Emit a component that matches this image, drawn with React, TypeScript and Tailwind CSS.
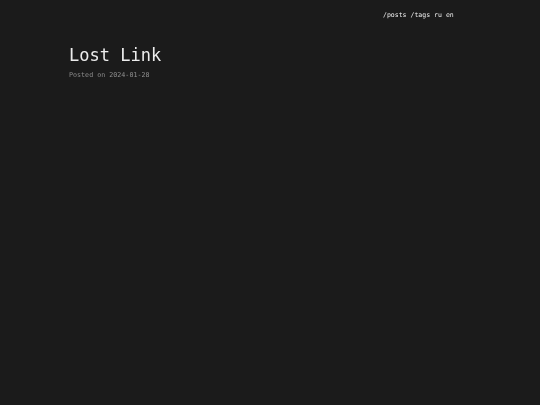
export default function App() {
  return (
    <div
      className="min-h-screen w-full bg-[#1b1b1b] text-[#e4e4e4]"
      style={{ fontFamily: '"DejaVu Sans Mono", "Liberation Mono", monospace' }}
    >
      <div className="mx-auto w-[402px]">
        <header className="flex justify-end pr-[17px] pt-[10px]">
          <nav className="flex gap-[4px] text-[6.5px] leading-[10px] text-[#f0f0f0] will-change-transform">
            <a>/posts</a>
            <a>/tags</a>
            <a>ru</a>
            <a>en</a>
          </nav>
        </header>
        <main className="pt-[23px] will-change-transform">
          <h1 className="text-[17px] leading-[24px] text-[#ececec]">Lost Link</h1>
          <p className="mt-[3px] text-[6.7px] leading-[10px] text-[#8a8a8a]">
            Posted on <span className="text-[#939393]">2024-01-28</span>
          </p>
        </main>
      </div>
    </div>
  );
}
